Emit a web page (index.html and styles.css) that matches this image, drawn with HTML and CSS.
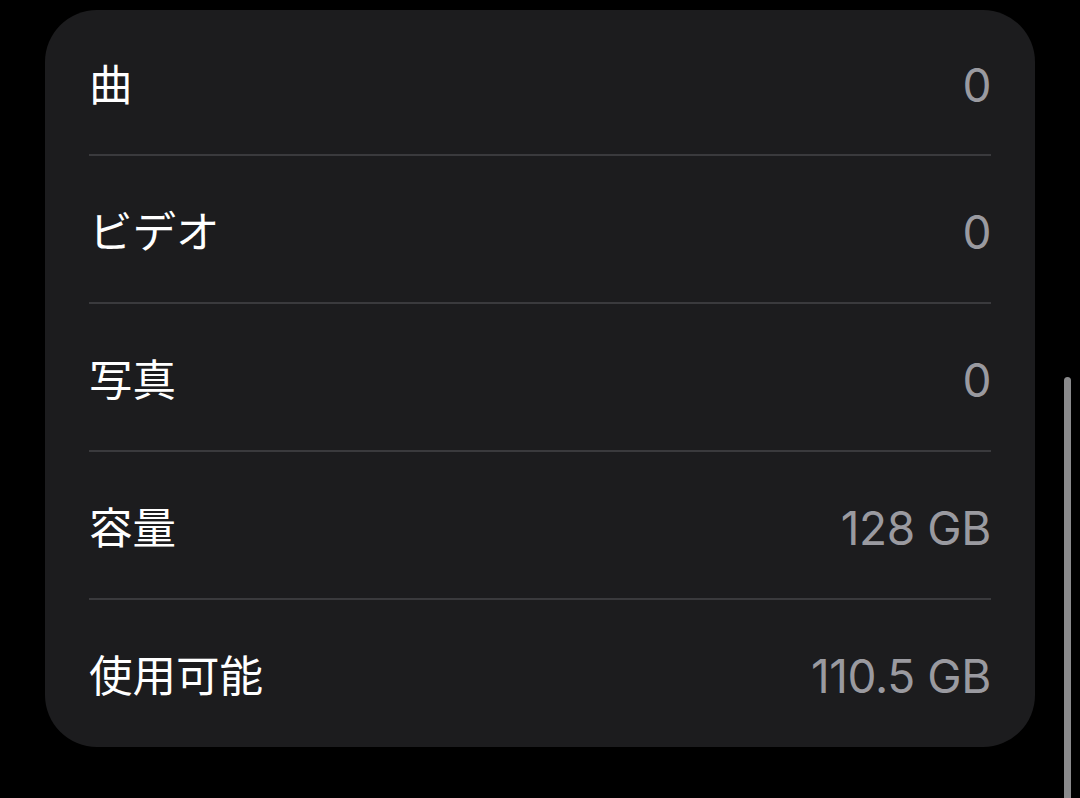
FILE: index.html
```html
<!DOCTYPE html>
<html lang="ja">
<head>
<meta charset="utf-8">
<link rel="stylesheet" href="styles.css">
</head>
<body>
<div class="card">
  <div class="row"><span class="label">曲</span><span class="value">0</span></div>
  <div class="row"><span class="label">ビデオ</span><span class="value">0</span></div>
  <div class="row"><span class="label">写真</span><span class="value">0</span></div>
  <div class="row"><span class="label">容量</span><span class="value">128 GB</span></div>
  <div class="row"><span class="label">使用可能</span><span class="value">110.5 GB</span></div>
</div>
<div class="scrollbar"></div>
</body>
</html>
```
FILE: styles.css
```css
html, body {
  margin: 0;
  padding: 0;
  background: #000;
  width: 1080px;
  height: 798px;
  overflow: hidden;
}
body {
  font-family: Inter, "Noto Sans CJK JP", sans-serif;
  padding-top: 10px;
  padding-left: 45px;
  box-sizing: border-box;
}
.card {
  width: 990px;
  height: 737px;
  background: #1c1c1e;
  border-radius: 52px;
  display: flex;
  flex-direction: column;
  padding: 0 44px;
  box-sizing: border-box;
}
.row {
  height: 148px;
  display: flex;
  align-items: center;
  justify-content: space-between;
  border-bottom: 2px solid #3a3a3d;
  box-sizing: border-box;
}
.row:first-child {
  height: 146px;
}
.row:last-child {
  border-bottom: none;
  height: 146px;
}
.label {
  font-family: "Noto Sans CJK JP", sans-serif;
  font-size: 43.5px;
  color: #fff;
}
.value {
  font-family: Inter, "Noto Sans", sans-serif;
  font-size: 46px;
  color: #9a9aa0;
  letter-spacing: -0.4px;
  padding-top: 5px;
}
.scrollbar {
  position: absolute;
  left: 1064px;
  top: 377px;
  width: 7px;
  height: 430px;
  border-radius: 4px;
  background: #8a8a8c;
}
```
